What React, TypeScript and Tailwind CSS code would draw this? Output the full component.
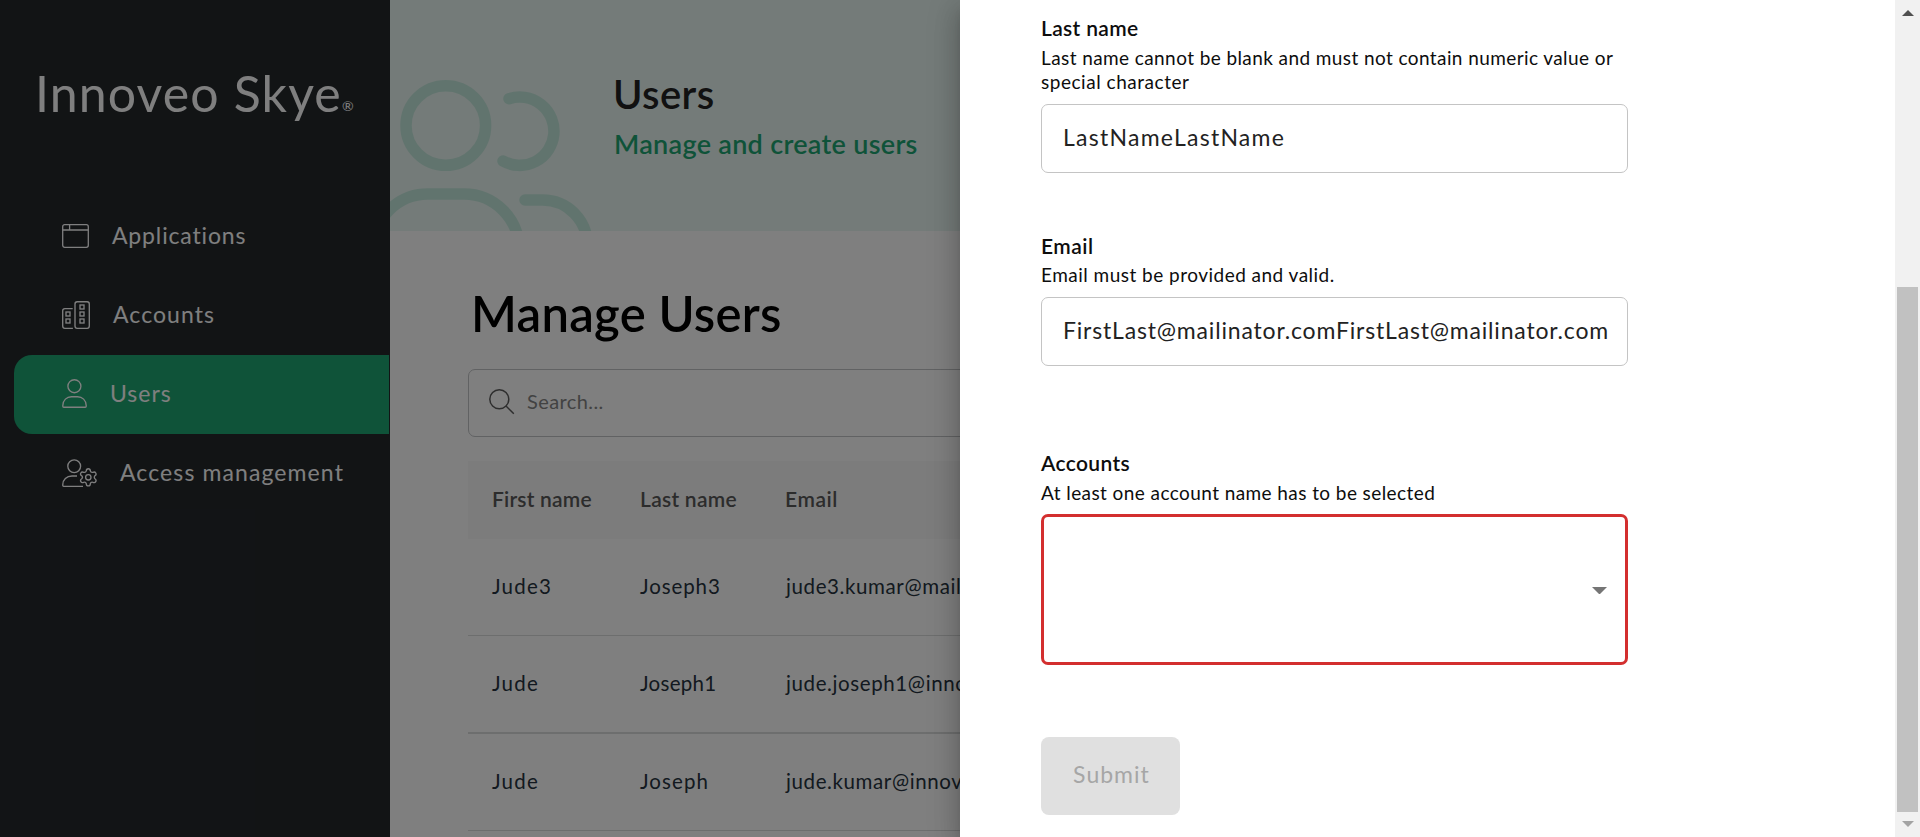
import type { ReactNode } from "react";

function AppIcon() {
  return (
    <svg width="27" height="24" viewBox="0 0 27 24" fill="none" stroke="currentColor" strokeWidth="1.3">
      <rect x="0.7" y="0.7" width="25.6" height="22.6" rx="2" />
      <path d="M0.7 6H26.3M7.6 0.7V6" />
    </svg>
  );
}

function BuildingsIcon() {
  return (
    <svg width="28" height="28" viewBox="0 0 28 28" fill="none" stroke="currentColor" strokeWidth="1.35">
      <rect x="13" y="0.7" width="14.3" height="26.6" rx="2.2" />
      <path d="M10.7 7.6H2.9a2.2 2.2 0 0 0-2.2 2.2v15.3a2.2 2.2 0 0 0 2.2 2.2h8" />
      <rect x="18" y="4" width="4" height="4" />
      <rect x="18" y="11" width="4" height="4" />
      <rect x="18" y="18" width="4" height="4" />
      <rect x="4" y="11" width="4" height="4" />
      <rect x="4" y="18" width="4" height="4" />
    </svg>
  );
}

function UserIcon() {
  return (
    <svg width="25" height="29" viewBox="0 0 25 29" fill="none" stroke="currentColor" strokeWidth="1.35">
      <circle cx="12.4" cy="7.2" r="6.5" />
      <path d="M0.8 27.2v-.6c0-5.4 4-8.9 8.6-8.9h6.2c4.6 0 8.6 3.5 8.6 8.9v.6a1 1 0 0 1-1 1H1.8a1 1 0 0 1-1-1z" />
    </svg>
  );
}

function UserGearIcon() {
  return (
    <svg width="35" height="28" viewBox="0 0 35 28" fill="none" stroke="currentColor" strokeWidth="1.35" strokeLinejoin="round">
      <circle cx="12.2" cy="7.2" r="6.4" />
      <path d="M15 17H10C4.5 17 0.8 20.8 0.8 25.6v.9a.8.8 0 0 0 .8.8H21" />
      <circle cx="26.3" cy="18.3" r="2.7" />
      <path d="M24.3 11.9 C24.3 9 28.3 9 28.3 11.9 C28.6 12.9 29.8 13.6 30.9 13.3 C33.4 12 35.3 15.3 32.9 16.8 C32.1 17.6 32.1 19 32.9 19.8 C35.3 21.3 33.4 24.6 30.9 23.3 C29.8 23 28.6 23.7 28.3 24.7 C28.3 27.6 24.3 27.6 24.3 24.7 C24 23.7 22.8 23 21.7 23.3 C19.2 24.6 17.3 21.3 19.7 19.8 C20.5 19 20.5 17.6 19.7 16.8 C17.3 15.3 19.2 12 21.7 13.3 C22.8 13.6 24 12.9 24.3 11.9Z" />
    </svg>
  );
}

function NavItem({ icon, active, children }: { icon: ReactNode; active?: boolean; children: ReactNode }) {
  return (
    <a
      className={
        active
          ? "mr-px ml-3.5 flex h-[79px] items-center gap-[23px] rounded-l-[18px] bg-[#1ea672] pb-0.5 pl-12"
          : "mr-px ml-3.5 flex h-[79px] items-center gap-[23px] pb-0.5 pl-12"
      }
    >
      {icon}
      {children}
    </a>
  );
}

function Sidebar() {
  return (
    <aside className="flex w-[390px] shrink-0 flex-col bg-[#24282b] text-white">
      <div className="flex h-[197px] items-start pt-[63px] pl-[35px]">
        <span className="text-[50px] leading-[60px] tracking-[1.13px]">Innoveo Skye</span>
        <span className="mt-[34px] text-[14px] leading-[18px]">®</span>
      </div>
      <nav className="text-[23px] leading-7 whitespace-nowrap">
        <NavItem icon={<AppIcon />}>
          <span className="pb-px tracking-[0.85px]">Applications</span>
        </NavItem>
        <NavItem icon={<BuildingsIcon />}>
          <span className="pb-px tracking-[1.06px]">Accounts</span>
        </NavItem>
        <NavItem icon={<UserIcon />} active>
          <span className="pb-px tracking-[0.98px]">Users</span>
        </NavItem>
        <NavItem icon={<UserGearIcon />}>
          <span className="pb-px tracking-[1.1px]">Access management</span>
        </NavItem>
      </nav>
    </aside>
  );
}

function Banner() {
  return (
    <header className="flex h-[231px] bg-[#e9f6f2]">
      <svg className="shrink-0" width="222" height="231" viewBox="0 0 222 231" fill="none" stroke="#c3e9dd" strokeWidth="11.5" strokeLinecap="round">
        <circle cx="55.8" cy="125.5" r="39.8" />
        <path d="M119 98.7A34.2 34.2 0 1 1 113 161" />
        <path d="M-17 249A55 55 0 0 1 38 194H74A55 55 0 0 1 129 249" />
        <path d="M135 200H152.6A44.6 44.6 0 0 1 197.2 244.6" />
      </svg>
      <div className="pt-[70px] whitespace-nowrap">
        <h2 className="ml-px text-[40px] leading-[48px] font-semibold tracking-[0.4px] text-[#222222]">Users</h2>
        <p className="mt-2.5 ml-0.5 text-[27px] leading-8 font-semibold tracking-[0.3px] text-[#1ea672]">
          Manage and create users
        </p>
      </div>
    </header>
  );
}

const rows = [
  { first: "Jude3", last: "Joseph3", email: "jude3.kumar@mailinator.com", line: "h-[97px] border-b", lastTracking: "tracking-[0.9px]" },
  { first: "Jude", last: "Joseph1", email: "jude.joseph1@innoveo.com", line: "h-[98px] border-b-2", lastTracking: "tracking-[0.3px]" },
  { first: "Jude", last: "Joseph", email: "jude.kumar@innoveo.com", line: "h-[97px] border-b", lastTracking: "tracking-[1.08px]" },
];

function UsersTable() {
  return (
    <div className="mt-6 whitespace-nowrap">
      <div className="grid h-[78px] grid-cols-[148px_145px_1fr] items-center bg-[#f8f8f8] pb-[3px] pl-6 text-[21px] leading-6 font-semibold text-[#595959]">
        <span className="tracking-[0.2px]">First name</span>
        <span className="tracking-[0.28px]">Last name</span>
        <span className="tracking-[0.55px]">Email</span>
      </div>
      {rows.map((row) => (
        <div key={row.email} className={`grid grid-cols-[148px_146px_1fr] items-center border-[#dbdcdd] pl-6 text-[20.5px] leading-6 text-[#263340] ${row.line}`}>
          <span className="pb-[3px] tracking-[1.2px]">{row.first}</span>
          <span className={`pb-[3px] ${row.lastTracking}`}>{row.last}</span>
          <span className="pb-[3px] tracking-[0.61px]">{row.email}</span>
        </div>
      ))}
    </div>
  );
}

function Main() {
  return (
    <main className="flex-1 bg-white">
      <Banner />
      <section className="pt-[52px] pl-[78px]">
        <h1 className="ml-[3px] text-[49px] leading-[60px] font-semibold tracking-[0.28px] text-black">Manage Users</h1>
        <div className="mt-[26px] flex h-[68px] items-center rounded-[7px] border border-[#c2c4c6] pb-0.5 pl-5">
          <svg width="26" height="26" viewBox="0 0 26 26" fill="none" stroke="#5c5c5c" strokeWidth="1.5">
            <circle cx="10.3" cy="10.3" r="9.5" />
            <path d="M17 17L24.8 24.8" />
          </svg>
          <span className="ml-3 pb-0.5 text-[20px] leading-6 tracking-[0.4px] text-[#858585]">Search...</span>
        </div>
        <UsersTable />
      </section>
    </main>
  );
}

function Scrollbar() {
  return (
    <div className="flex w-[25px] shrink-0 flex-col items-center bg-[#f1f1f1]">
      <svg width="12" height="6" viewBox="0 0 12 6" className="mt-2.5" fill="#505050">
        <path d="M6 0L12 6H0z" />
      </svg>
      <div className="mt-[271px] h-[525px] w-[21px] bg-[#c1c1c1]" />
      <svg width="12" height="6" viewBox="0 0 12 6" className="mt-[9px]" fill="#a3a3a3">
        <path d="M0 0H12L6 6z" />
      </svg>
    </div>
  );
}

function Drawer() {
  return (
    <div className="absolute inset-y-0 right-0 flex w-[960px] bg-white shadow-[0_8px_10px_-5px_rgba(0,0,0,0.2),0_16px_24px_2px_rgba(0,0,0,0.14),0_6px_30px_5px_rgba(0,0,0,0.12)]">
      <form className="flex-1 pt-[15px] pl-[81px] text-[19px] leading-6 text-[#0d0d0d]">
        <div className="w-[587px]">
          <h3 className="text-[21px] leading-[26px] font-semibold tracking-[0.34px]">Last name</h3>
          <p className="mt-[5px] whitespace-nowrap">
            <span className="tracking-[0.41px]">Last name cannot be blank and must not contain numeric value or</span>
            <br />
            <span className="tracking-[0.53px]">special character</span>
          </p>
          <div className="mt-2.5 flex h-[69px] items-center rounded-[7px] border border-[#c4c4c4] pb-[3px] pl-[21px] text-[23px] tracking-[1.26px] whitespace-nowrap text-[#222222]">
            LastNameLastName
          </div>

          <h3 className="mt-[60px] text-[21px] leading-[26px] font-semibold tracking-[0.5px]">Email</h3>
          <p className="mt-1 tracking-[0.48px]">Email must be provided and valid.</p>
          <div className="mt-2.5 flex h-[69px] items-center rounded-[7px] border border-[#c4c4c4] pb-[3px] pl-[21px] text-[23px] tracking-[0.82px] whitespace-nowrap text-[#222222]">
            FirstLast@mailinator.comFirstLast@mailinator.com
          </div>

          <h3 className="mt-[84px] text-[21px] leading-[26px] font-semibold tracking-[0.36px]">Accounts</h3>
          <p className="mt-[5px] tracking-[0.42px]">At least one account name has to be selected</p>
          <div className="mt-[9px] flex h-[151px] items-center justify-end rounded-[7px] border-3 border-[#d32f2f] pt-0.5 pr-[18px]">
            <svg width="15" height="7.5" viewBox="0 0 15 7.5" fill="#757575">
              <path d="M0 0H15L7.5 7.5z" />
            </svg>
          </div>

          <button
            type="button"
            disabled
            className="mt-[72px] flex h-[78px] w-[139px] items-center justify-center rounded-lg bg-[#e0e0e0] pb-1 pl-0.5 text-[23px] tracking-[1.02px] text-[#a6a6a6]"
          >
            Submit
          </button>
        </div>
      </form>
      <Scrollbar />
    </div>
  );
}

export default function App() {
  return (
    <div className="relative flex h-[837px] w-[1920px] overflow-hidden font-['Lato',sans-serif]">
      <Sidebar />
      <Main />
      <div className="absolute inset-0 bg-black/50" />
      <Drawer />
    </div>
  );
}
